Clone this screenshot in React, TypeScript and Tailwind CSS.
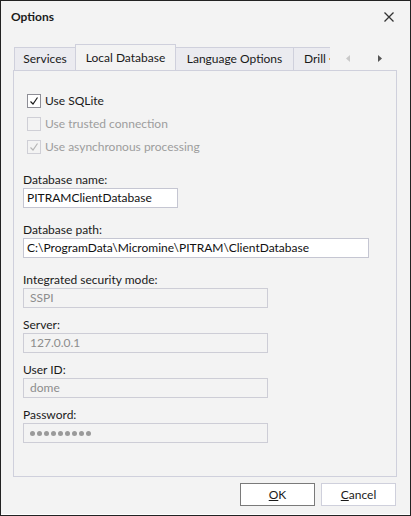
import React from "react";

const font = { fontFamily: 'Lato, "Noto Sans", sans-serif' };

function Check({ checked, disabled, label }: { checked?: boolean; disabled?: boolean; label: string }) {
  return (
    <div className="flex items-center h-[23px] ml-[4px] gap-[4px]">
      <div
        className={
          "w-[14px] h-[14px] border flex items-center justify-center " +
          (disabled ? "border-[#cfcfd6] bg-[#f3f3f3]" : "border-[#8e8e96] bg-white")
        }
      >
        {checked && (
          <svg width="12" height="12" viewBox="0 0 12 12">
            <polyline
              points="2.5,6.5 5,9 9.5,2.5"
              fill="none"
              stroke={disabled ? "#b5b5b5" : "#1a1a1a"}
              strokeWidth="1.2"
            />
          </svg>
        )}
      </div>
      <span className={disabled ? "text-[#9d9d9d]" : "text-[#1a1a1a]"}>{label}</span>
    </div>
  );
}

function Field({
  label,
  value,
  width,
  disabled,
  mt,
  dots,
}: {
  label: string;
  value?: string;
  width: string;
  disabled?: boolean;
  mt: string;
  dots?: boolean;
}) {
  return (
    <div className={mt}>
      <div className="h-[16px] leading-[16px] text-[#1a1a1a]">{label}</div>
      <div
        className={
          "h-[20px] border flex items-center " +
          width +
          (disabled
            ? " border-[#cdcdd6] bg-[#f3f3f3] text-[#8d8d8d] pl-[6px]"
            : " border-[#c5c6d2] bg-white text-[#111] pl-[3px]")
        }
      >
        {dots ? (
          <div className="flex gap-[2px]">
            {Array.from({ length: 9 }).map((_, i) => (
              <span key={i} className="w-[5px] h-[5px] rounded-full bg-[#9a9a9a]" />
            ))}
          </div>
        ) : (
          <span className="leading-none">{value}</span>
        )}
      </div>
    </div>
  );
}

export default function App() {
  return (
    <div
      className="w-[411px] h-[516px] bg-[#f3f3f3] border border-[#222] flex flex-col text-[12px]"
      style={font}
    >
      {/* Title bar */}
      <div className="h-[31px] flex items-center justify-between pl-[10px] pr-[16px]">
        <span className="font-bold text-[#1a1a1a]">Options</span>
        <svg width="10" height="10" viewBox="0 0 10 10">
          <path d="M0.5 0.5 L9.5 9.5 M9.5 0.5 L0.5 9.5" stroke="#333" strokeWidth="1.3" />
        </svg>
      </div>

      <div className="mt-[12px] ml-[12px] w-[384px]">
        {/* Tabs */}
        <div className="flex items-end h-[26px]">
          <div className="flex items-end w-[316px] ml-[1px] overflow-hidden">
            <div className="shrink-0 w-[61px] h-[23px] border-l border-t border-[#cfd0dc] bg-[#ebebf0] flex items-center justify-center text-[#1a1a1a]">
              Services
            </div>
            <div className="shrink-0 relative z-10 -mb-px w-[101px] h-[27px] border-x border-t border-[#cfd0dc] bg-[#f3f3f3] flex items-center justify-center pb-[1px] text-[#1a1a1a]">
              Local Database
            </div>
            <div className="shrink-0 w-[118px] h-[23px] border-t border-r border-[#cfd0dc] bg-[#ebebf0] flex items-center justify-center text-[#1a1a1a]">
              Language Options
            </div>
            <div className="shrink-0 w-[60px] h-[23px] border-t border-[#cfd0dc] bg-[#ebebf0] flex items-center pl-[10px] text-[#1a1a1a]">
              <span>Drill</span>
              <span className="ml-[3px] w-[3px] h-[2px] bg-[#e8a33c]" />
            </div>
          </div>
          <div className="flex items-center h-[23px] ml-[16px] gap-[28px]">
            <svg width="4" height="7" viewBox="0 0 4 7">
              <polygon points="4,0 4,7 0,3.5" fill="#c9c9c9" />
            </svg>
            <svg width="4" height="7" viewBox="0 0 4 7">
              <polygon points="0,0 0,7 4,3.5" fill="#555" />
            </svg>
          </div>
        </div>

        {/* Panel */}
        <div className="h-[407px] border border-[#cfd0dc] bg-[#f3f3f3] pt-[18px] px-[9px]">
          <Check checked label="Use SQLite" />
          <Check disabled label="Use trusted connection" />
          <Check checked disabled label="Use asynchronous processing" />

          <Field mt="mt-[14px]" label="Database name:" value="PITRAMClientDatabase" width="w-[155px]" />
          <Field
            mt="mt-[14px]"
            label="Database path:"
            value="C:\ProgramData\Micromine\PITRAM\ClientDatabase"
            width="w-[346px]"
          />
          <Field mt="mt-[14px]" label="Integrated security mode:" value="SSPI" width="w-[245px]" disabled />
          <Field mt="mt-[9px]" label="Server:" value="127.0.0.1" width="w-[245px]" disabled />
          <Field mt="mt-[9px]" label="User ID:" value="dome" width="w-[245px]" disabled />
          <Field mt="mt-[9px]" label="Password:" width="w-[245px]" disabled dots />
        </div>
      </div>

      {/* Buttons */}
      <div className="mt-[6px] flex justify-end gap-[6px] pr-[14px]">
        <button className="w-[75px] h-[23px] border border-[#7a7a7a] bg-white text-[#1a1a1a]">
          <span className="underline">O</span>K
        </button>
        <button className="w-[75px] h-[23px] border border-[#cfd0dc] bg-white text-[#1a1a1a]">
          <span className="underline">C</span>ancel
        </button>
      </div>
      <div className="mt-auto h-px bg-white" />
    </div>
  );
}
